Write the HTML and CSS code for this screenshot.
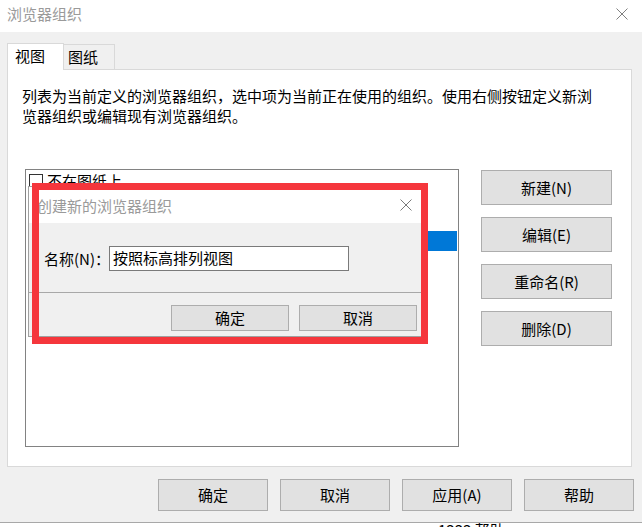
FILE: index.html
```html
<!DOCTYPE html>
<html lang="zh-CN">
<head>
    <meta charset="UTF-8">
    <title>浏览器组织</title>
    <link rel="stylesheet" href="styles.css">
</head>
<body>
<div class="window">
    <div class="titlebar">
        <span class="title">浏览器组织</span>
        <svg class="close" width="12" height="12" viewBox="0 0 12 12">
            <path d="M0.5 0.5 L11.5 11.5 M11.5 0.5 L0.5 11.5" stroke="#808080" stroke-width="1" fill="none"/>
        </svg>
    </div>
    <div class="client">
        <div class="tabs">
            <div class="tab active">视图</div>
            <div class="tab">图纸</div>
        </div>
        <div class="panel">
            <p class="desc">列表为当前定义的浏览器组织，选中项为当前正在使用的组织。使用右侧按钮定义新浏<br>览器组织或编辑现有浏览器组织。</p>
            <div class="content">
                <div class="list">
                    <div class="row"><span class="check"></span>不在图纸上</div>
                    <div class="row"><span class="check"></span>全部</div>
                    <div class="row"><span class="check"></span>类型/规程</div>
                    <div class="row selected"><span class="check"></span><span class="label">按照标高排列视图</span></div>
                    <div class="row"><span class="check"></span>阶段</div>
                </div>
                <div class="side">
                    <button class="btn side-btn">新建(N)</button>
                    <button class="btn side-btn">编辑(E)</button>
                    <button class="btn side-btn">重命名(R)</button>
                    <button class="btn side-btn">删除(D)</button>
                </div>
            </div>
        </div>
        <div class="footer">
            <button class="btn foot-btn">确定</button>
            <button class="btn foot-btn">取消</button>
            <button class="btn foot-btn">应用(A)</button>
            <button class="btn foot-btn">帮助</button>
        </div>
    </div>
    <div class="under"><span>1333 帮助</span></div>

    <!-- small dialog on top of the list -->
    <div class="popup">
        <div class="popup-title">
            <span>创建新的浏览器组织</span>
            <svg width="12" height="12" viewBox="0 0 12 12">
                <path d="M0.5 0.5 L11.5 11.5 M11.5 0.5 L0.5 11.5" stroke="#7a7a7a" stroke-width="1" fill="none"/>
            </svg>
        </div>
        <div class="popup-body">
            <span class="name-label">名称(N)：</span>
            <div class="input">按照标高排列视图</div>
        </div>
        <div class="popup-foot">
            <button class="btn pop-btn">确定</button>
            <button class="btn pop-btn">取消</button>
        </div>
    </div>
    <div class="mark"></div>
</div>
</body>
</html>
```

FILE: styles.css
```css
body, p {
    margin: 0;
    padding: 0;
}

body {
    font-family: "Noto Sans CJK SC", "Microsoft YaHei", sans-serif;
    font-size: 15px;
    color: #000;
    background: #fff;
}

.window {
    width: 642px;
    height: 527px;
    position: relative;
    overflow: hidden;
}

.titlebar {
    height: 32px;
    background: #fff;
    display: flex;
    align-items: center;
    justify-content: space-between;
    padding: 0 14px 5px 7px;
    box-sizing: border-box;
}

.title {
    color: #9a9a9a;
    line-height: 20px;
}

.client {
    background: #f0f0f0;
    padding: 11px 8px 0 7px;
    border-bottom: 1px solid #a8a8a8;
}

.tabs {
    display: flex;
    align-items: flex-end;
    height: 26px;
    position: relative;
    z-index: 1;
}

.tab {
    height: 25px;
    width: 51px;
    box-sizing: border-box;
    border: 1px solid #d9d9d9;
    border-left: none;
    border-bottom: none;
    background: #f0f0f0;
    padding-left: 4px;
    line-height: 24px;
}

.tab.active {
    height: 27px;
    width: 57px;
    border-left: 1px solid #d9d9d9;
    background: #fff;
    padding-left: 7px;
    line-height: 24px;
    margin-bottom: -1px;
}

.panel {
    width: 625px;
    height: 398px;
    box-sizing: border-box;
    background: #fff;
    border: 1px solid #d9d9d9;
}

.desc {
    padding: 16px 0 0 14px;
    line-height: 20px;
}

.content {
    display: flex;
    gap: 22px;
    margin-top: 43px;
    padding-left: 17px;
}

.list {
    width: 434px;
    height: 278px;
    box-sizing: border-box;
    border: 1px solid #828282;
    padding-top: 1px;
}

.row {
    height: 20px;
    line-height: 20px;
    display: flex;
    align-items: center;
    padding-left: 3px;
    margin-right: 1px;
}

.check {
    width: 14px;
    height: 14px;
    box-sizing: border-box;
    border: 1px solid #333;
    margin-right: 4px;
    background: #fff;
}

.row.selected .label {
    flex: 1;
    background: #0078d7;
    color: #fff;
}

.side {
    display: flex;
    flex-direction: column;
    gap: 12px;
    padding-top: 1px;
}

.btn {
    font-family: inherit;
    font-size: 15px;
    color: #000;
    background: #e1e1e1;
    border: 1px solid #adadad;
    padding: 0;
    line-height: 20px;
}

.side-btn {
    width: 131px;
    height: 35px;
}

.footer {
    display: flex;
    justify-content: flex-end;
    gap: 12px;
    padding: 12px 0 11px;
}

.foot-btn {
    width: 110px;
    height: 32px;
}

.under {
    height: 4px;
    overflow: hidden;
    padding-left: 438px;
    font-size: 15px;
    line-height: 20px;
}

.under span {
    display: block;
    margin-top: -3px;
}

/* create dialog */
.popup {
    position: absolute;
    left: 28px;
    top: 186px;
    width: 396px;
    height: 151px;
    box-sizing: border-box;
    border: 1px solid #a0a0a0;
    background: #f0f0f0;
    z-index: 2;
}

.popup-title {
    height: 36px;
    background: #fff;
    display: flex;
    align-items: center;
    justify-content: space-between;
    padding: 0 11px 0 8px;
    color: #9a9a9a;
}

.popup-body {
    height: 69px;
    display: flex;
    align-items: center;
    padding: 1px 0 0 15px;
    box-sizing: border-box;
}

.name-label {
    width: 65px;
    white-space: nowrap;
}

.input {
    width: 240px;
    height: 25px;
    box-sizing: border-box;
    border: 1px solid #7a7a7a;
    background: #fff;
    line-height: 22px;
    padding-left: 3px;
}

.popup-foot {
    border-top: 1px solid #a8a8a8;
    display: flex;
    justify-content: flex-end;
    gap: 10px;
    padding: 12px 6px 0 0;
}

.pop-btn {
    width: 118px;
    height: 26px;
}

.mark {
    position: absolute;
    left: 32px;
    top: 183px;
    width: 396px;
    height: 161px;
    box-sizing: border-box;
    border: 7px solid #f5363c;
    z-index: 3;
}
```
